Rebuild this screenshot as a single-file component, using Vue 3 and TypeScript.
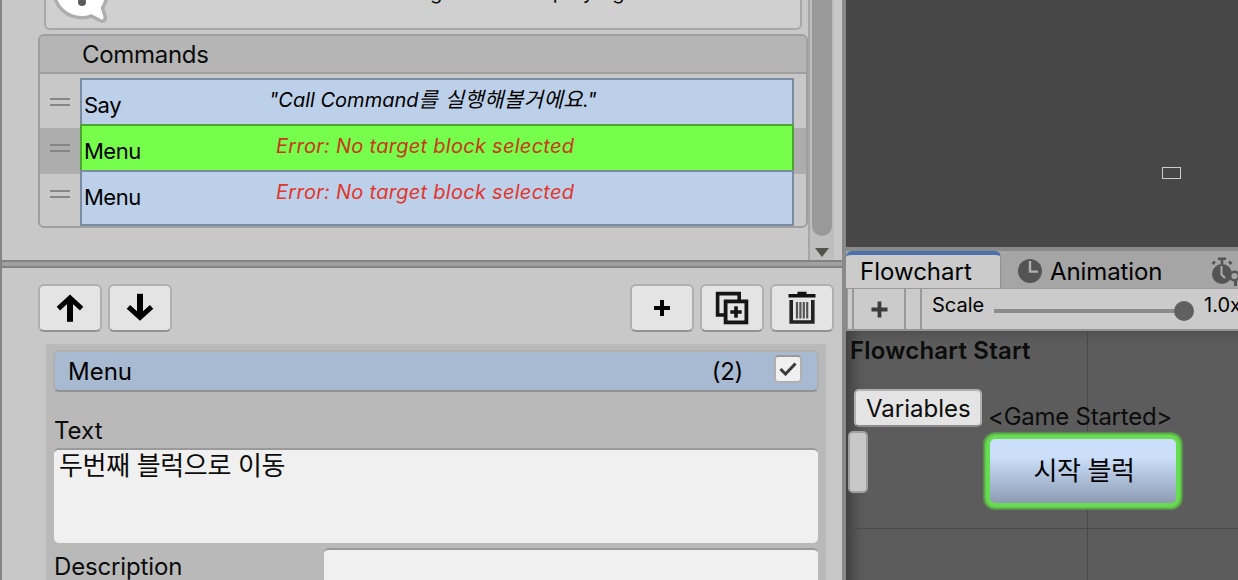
<script setup lang="ts">
interface Run {
  text: string
  hangul?: boolean
}

interface Command {
  name: string
  summary: Run[]
  selected?: boolean
  error?: boolean
}

const missingTarget: Run[] = [{ text: 'Error: No target block selected' }]

const commands: Command[] = [
  { name: 'Say', summary: [{ text: '"Call Command' }, { text: '를 실행해볼거에요', hangul: true }, { text: '."' }] },
  { name: 'Menu', summary: missingTarget, selected: true, error: true },
  { name: 'Menu', summary: missingTarget, error: true },
]
</script>

<template>
  <div class="editor">
    <section class="inspector">
      <div class="upper">
        <div class="upper-content">
          <div class="help">
            <svg class="bubble" width="66" height="28" viewBox="0 0 66 28">
              <path d="M8 -10 C8 6 20 17.7 36 17.7 Q41 17.7 45 16 L54 20.5 Q60 23 59 16 L56.5 8 Q61 1 62 -10 Z" fill="#fff" stroke="#adadad" stroke-width="3.5" />
              <circle cx="36" cy="2" r="4" fill="#5a5a5a" />
            </svg>
            <span class="help-text">g when displaying</span>
          </div>
          <div class="list">
            <div class="list-head"><span>Commands</span></div>
            <div class="list-body">
              <div v-for="(c, i) in commands" :key="i" class="item" :class="{ selected: c.selected }">
                <div class="handle"><i></i><i></i></div>
                <div class="command" :class="{ last: i === commands.length - 1 }">
                  <span class="name">{{ c.name }}</span>
                  <span class="summary" :class="{ error: c.error }"><span v-for="(r, n) in c.summary" :key="n" :class="{ hangul: r.hangul }">{{ r.text }}</span></span>
                </div>
              </div>
            </div>
          </div>
        </div>
        <div class="scrollbar">
          <div class="thumb"></div>
          <svg width="14" height="9" viewBox="0 0 14 9"><path d="M0 0H14L7 9Z" fill="#53534c" /></svg>
        </div>
      </div>
      <div class="splitter"></div>
      <div class="lower">
        <div class="toolbar">
          <button class="btn">
            <svg width="30" height="30" viewBox="0 0 30 30">
              <path d="M15 28.8V6" stroke="#000" stroke-width="6" />
              <path d="M3.4 15.6L15 5L26.6 15.6" fill="none" stroke="#000" stroke-width="5" />
            </svg>
          </button>
          <button class="btn">
            <svg width="30" height="30" viewBox="0 0 30 30">
              <path d="M15 .8V23" stroke="#000" stroke-width="6" />
              <path d="M3.4 13.8L15 24.4L26.6 13.8" fill="none" stroke="#000" stroke-width="5" />
            </svg>
          </button>
          <div class="spacer"></div>
          <button class="btn">
            <svg width="18" height="18" viewBox="0 0 18 18"><path d="M9 1V17M1 9H17" stroke="#000" stroke-width="4" /></svg>
          </button>
          <button class="btn">
            <svg width="34" height="34" viewBox="0 0 34 34">
              <path d="M9 24H2.6V2.6H24.2V9" fill="none" stroke="#151515" stroke-width="3.6" />
              <rect x="10.6" y="10.4" width="20.8" height="21" fill="#e4e4e4" stroke="#151515" stroke-width="3.8" />
              <path d="M21 15.3V26.7M15.3 21H26.7" stroke="#151515" stroke-width="3.6" />
            </svg>
          </button>
          <button class="btn">
            <svg width="28" height="34" viewBox="0 0 28 34">
              <path d="M.5 4.8H27.5M9.5 2.5H18.5" stroke="#111" stroke-width="3.4" />
              <path d="M3.2 9V31H24.8V9" fill="none" stroke="#222" stroke-width="3.6" />
              <path d="M9 11V27.4M12.4 11V27.4M15.8 11V27.4M19.2 11V27.4" stroke="#555" stroke-width="2.2" />
            </svg>
          </button>
        </div>
        <div class="properties">
          <div class="title">
            <span>Menu</span>
            <span class="spacer"></span>
            <span class="item-id">(2)</span>
            <span class="check">
              <svg width="18" height="14" viewBox="0 0 18 14"><path d="M1.5 7L6.5 12L16.5 1.5" fill="none" stroke="#3a3a3a" stroke-width="3" /></svg>
            </span>
          </div>
          <div class="label">Text</div>
          <div class="area"><span>두번째 블럭으로 이동</span></div>
          <div class="field-row">
            <span class="field-label">Description</span>
            <div class="field"></div>
          </div>
        </div>
      </div>
    </section>

    <section class="right">
      <div class="scene"><div class="camera"></div></div>
      <div class="tabs">
        <div class="tab active"><span>Flowchart</span></div>
        <div class="tab anim">
          <svg width="24" height="24" viewBox="0 0 24 24">
            <circle cx="12" cy="12" r="12" fill="#545454" />
            <path d="M12 2V12.6H20" fill="none" stroke="#b0b0b0" stroke-width="2.4" />
          </svg>
          <span>Animation</span>
        </div>
        <svg class="watch" width="27" height="30" viewBox="0 0 27 30">
          <circle cx="11" cy="17" r="10" fill="#545454" />
          <path d="M7 1.8H15M11 2V7M1.5 7L4 4.5M18 4.5L20.5 7" stroke="#545454" stroke-width="2.6" fill="none" />
          <path d="M10.5 9V17.5L14 21" stroke="#ababab" stroke-width="2" fill="none" />
          <circle cx="23.5" cy="19" r="4.3" fill="#a5a5a5" stroke="#545454" stroke-width="2.4" />
          <path d="M24.5 23V29" stroke="#545454" stroke-width="3" />
        </svg>
      </div>
      <div class="flow-bar">
        <div class="cell edge"></div>
        <div class="cell add">
          <svg width="17" height="17" viewBox="0 0 17 17"><path d="M8.5 .5V16.5M.5 8.5H16.5" stroke="#3c3c3c" stroke-width="3.8" /></svg>
        </div>
        <div class="cell gap"></div>
        <span class="scale">Scale</span>
        <div class="slider"><div class="knob"></div></div>
        <span class="value">1.0x</span>
      </div>
      <div class="canvas">
        <div class="grid-v"></div>
        <div class="grid-h"></div>
        <div class="flow-name">Flowchart Start</div>
        <div class="variables"><span>Variables</span></div>
        <div class="var-box"></div>
        <div class="event">&lt;Game Started&gt;</div>
        <div class="block"><span>시작 블럭</span></div>
      </div>
    </section>
  </div>
</template>

<style>
html, body { margin: 0; overflow: hidden; }
</style>

<style scoped>
.editor {
  width: 1238px; height: 580px; display: flex; overflow: hidden; background: #8a8a8a;
  font-family: Inter, "Noto Sans CJK KR", sans-serif; font-size: 24px; color: #0c0c0c; white-space: nowrap;
}
.editor * { box-sizing: border-box; }
.spacer { flex: 1; }

.inspector { width: 842px; flex: none; border-left: 2px solid #858585; background: #c8c8c8; display: flex; flex-direction: column; }
.upper { height: 260px; display: flex; flex: none; }
.upper-content { width: 806px; padding-left: 36px; }
.help { height: 30px; width: 758px; margin-left: 6px; border: 2px solid #a8a8a8; border-top: 0; border-radius: 0 0 6px 6px; background: #d0d0d0; display: flex; overflow: hidden; }
.bubble { flex: none; }
.help-text { margin: -20px 0 0 318px; font-size: 20px; line-height: 24px; letter-spacing: .6px; word-spacing: 7px; }
.list { margin-top: 4px; width: 770px; height: 194px; border: 2px solid #9f9f9f; border-radius: 6px; }
.list-head { height: 38px; background: #b5b5b5; border-bottom: 2px solid #9f9f9f; border-radius: 4px 4px 0 0; line-height: 38px; padding-left: 42px; letter-spacing: -.3px; }
.list-body { padding-top: 8px; }
.item { height: 46px; display: flex; }
.item.selected { background: #adadad; }
.handle { width: 40px; padding: 16px 10px 0; display: flex; flex-direction: column; gap: 4px; flex: none; }
.handle i { height: 2px; background: #858585; }
.command { width: 714px; height: 48px; margin-top: -4px; border: 2px solid #7b8ba2; background: #bdd0e9; display: flex; flex: none; color: #000; z-index: 0; }
.selected .command { background: #77fd4b; border-color: #4da52f; }
.command.last { height: 56px; }
.name { width: 187px; padding-left: 2px; font-size: 22px; line-height: 50px; letter-spacing: -.5px; }
.summary { font-size: 20px; font-style: italic; line-height: 40px; }
.summary.error { padding-left: 7px; color: #e2352c; letter-spacing: .28px; }
.selected .summary.error { color: #c8381f; }
.hangul { font-size: 21px; line-height: 20px; letter-spacing: .45px; }
.scrollbar { width: 26px; background: #bebebe; border-left: 2px solid #a6a6a6; display: flex; flex-direction: column; align-items: center; gap: 12px; }
.thumb { width: 20px; height: 236px; border-radius: 0 0 10px 10px; background: #999; }
.splitter { height: 8px; flex: none; background: #a1a1a1; border-top: 2px solid #828282; border-bottom: 2px solid #828282; }

.lower { flex: 1; min-height: 0; display: flex; flex-direction: column; }
.toolbar { display: flex; gap: 6px; padding: 16px 8px 0 36px; flex: none; }
.btn { width: 64px; height: 48px; flex: none; padding: 0; border: 2px solid #b0b0b0; border-bottom-color: #929292; border-radius: 6px; background: #e4e4e4; display: flex; align-items: center; justify-content: center; }
.toolbar .spacer { margin: 0 -6px; }
.properties { margin: 12px 16px 0 44px; width: 780px; height: 300px; background: #b9b9b9; padding: 6px 7px 0; }
.title { height: 42px; border: 2px solid #b0b0b0; border-bottom-color: #929292; border-radius: 6px; background: #a8bad1; display: flex; color: #000; line-height: 39px; padding-left: 13px; }
.item-id { letter-spacing: -.3px; }
.check { width: 28px; height: 28px; margin: 3px 15px 0 31px; border: 2px solid #b0b0b0; border-top-color: #9a9a9a; border-radius: 4px; background: #f0f0f0; display: flex; align-items: center; justify-content: center; }
.label { height: 38px; margin: 18px 0 0 1px; line-height: 42px; }
.area { height: 95px; margin: 0 1px; border-top: 2px solid #9a9a9a; border-radius: 5px; background: #f0f0f0; font-size: 26px; line-height: 32px; padding-left: 5px; letter-spacing: -.35px; }
.field-row { display: flex; justify-content: space-between; margin: 5px 1px 0; line-height: 38px; }
.field-label { letter-spacing: -.15px; }
.field { width: 494px; height: 60px; border-top: 2px solid #9a9a9a; border-radius: 5px; background: #f0f0f0; }

.right { margin-left: 4px; width: 392px; flex: none; }
.scene { height: 247px; background: #474747; padding: 167px 0 0 316px; }
.camera { width: 19px; height: 12px; border: 1px solid #ccc; }
.tabs { height: 41px; border-top: 4px solid #8a8a8a; background: #a5a5a5; display: flex; line-height: 42px; color: #000; }
.tab.active { width: 155px; border-top: 4px solid #4a71ae; border-right: 1px solid #909090; border-radius: 6px 6px 0 0; background: #cbcbcb; padding-left: 14px; line-height: 34px; }
.tab.anim { width: 210px; display: flex; padding-left: 17px; gap: 8px; letter-spacing: -.1px; }
.tab.anim svg { margin-top: 8px; }
.watch { margin-top: 6px; }
.flow-bar { height: 43px; margin-left: 1px; border-top: 1px solid #999; border-bottom: 2px solid #949494; background: #cbcbcb; display: flex; color: #000; }
.cell { border-right: 2px solid #999; flex: none; }
.edge { width: 7px; border-left: 1px solid #999; }
.add { width: 52px; display: flex; align-items: center; justify-content: center; }
.gap { width: 16px; }
.scale { width: 72px; padding-left: 10px; font-size: 20px; line-height: 33px; flex: none; }
.slider { width: 200px; height: 4px; margin-top: 20px; background: linear-gradient(90deg, #8c8c8c 190px, transparent 190px); display: flex; justify-content: flex-end; align-items: center; flex: none; }
.knob { width: 20px; height: 20px; border-radius: 50%; background: #606060; flex: none; }
.value { padding-left: 10px; font-size: 20px; line-height: 33px; }

.canvas { position: relative; height: 249px; background: #5c5c5c; border-left: 2px solid #444; box-shadow: inset 14px 8px 14px -9px rgba(0,0,0,.3); }
.canvas > * { position: absolute; }
.grid-v { left: 239px; top: 0; width: 1px; height: 249px; background: #494949; }
.grid-h { left: 0; top: 197px; width: 390px; height: 1px; background: #494949; }
.flow-name { left: 2px; top: 0; line-height: 40px; font-weight: 600; letter-spacing: .2px; }
.variables { left: 6px; top: 58px; width: 128px; height: 38px; border: 2px solid #b0b0b0; border-bottom-color: #8c8c8c; border-radius: 5px; background: #e4e4e4; line-height: 35px; padding-left: 10px; }
.var-box { left: 0; top: 100px; width: 20px; height: 62px; border: 2px solid #a0a0a0; border-radius: 5px; background: #c8c8c8; }
.event { left: 140px; top: 66px; line-height: 40px; letter-spacing: -.25px; }
.block { left: 138px; top: 104px; width: 194px; height: 72px; border: 4px solid #68dc50; border-radius: 9px; background: linear-gradient(180deg, #cbdffb 0%, #cbdffb 28%, #8d9cb3 100%); box-shadow: 0 0 0 1.5px #62c34d, 0 0 1px 3px rgba(88,165,72,.7); text-align: center; font-size: 26px; line-height: 63px; color: #000; letter-spacing: -.4px; padding-left: 2px; }
</style>
